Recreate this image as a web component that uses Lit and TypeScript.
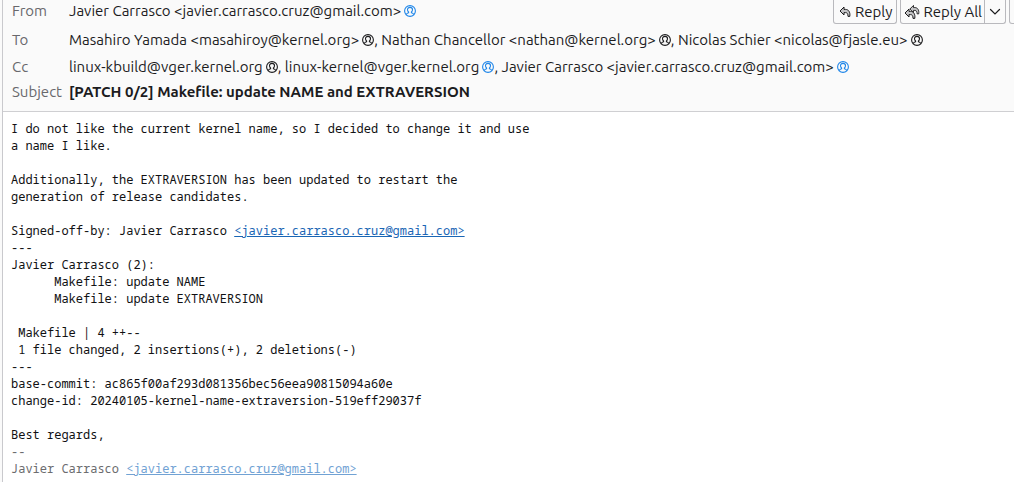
import { LitElement, html, css, svg, nothing } from "lit";
import { customElement, property } from "lit/decorators.js";

interface Contact {
  text: string;
  known?: boolean;
}

interface Line {
  text: string;
  address?: string;
}

const FROM: Contact[] = [{ text: "Javier Carrasco <javier.carrasco.cruz@gmail.com>", known: true }];
const TO: Contact[] = [
  { text: "Masahiro Yamada <masahiroy@kernel.org>" },
  { text: "Nathan Chancellor <nathan@kernel.org>" },
  { text: "Nicolas Schier <nicolas@fjasle.eu>" },
];
const CC: Contact[] = [
  { text: "linux-kbuild@vger.kernel.org" },
  { text: "linux-kernel@vger.kernel.org", known: true },
  { text: "Javier Carrasco <javier.carrasco.cruz@gmail.com>", known: true },
];

const ADDRESS = "javier.carrasco.cruz@gmail.com";

const BODY: Line[] = [
  { text: "I do not like the current kernel name, so I decided to change it and use" },
  { text: "a name I like." },
  { text: "" },
  { text: "Additionally, the EXTRAVERSION has been updated to restart the" },
  { text: "generation of release candidates." },
  { text: "" },
  { text: "Signed-off-by: Javier Carrasco ", address: ADDRESS },
  { text: "---" },
  { text: "Javier Carrasco (2):" },
  { text: "      Makefile: update NAME" },
  { text: "      Makefile: update EXTRAVERSION" },
  { text: "" },
  { text: " Makefile | 4 ++--" },
  { text: " 1 file changed, 2 insertions(+), 2 deletions(-)" },
  { text: "---" },
  { text: "base-commit: ac865f00af293d081356bec56eea90815094a60e" },
  { text: "change-id: 20240105-kernel-name-extraversion-519eff29037f" },
  { text: "" },
  { text: "Best regards," },
];

const SIGNATURE: Line[] = [{ text: "--" }, { text: "Javier Carrasco ", address: ADDRESS }];

const arrow = svg`<path d="M5 1 1 5l4 4V6.600h1.500c1.700 0 2.500 1.200 2.500 3.800h1.800c.6-4.400-1.300-7-4.300-7H5Z"
  fill="#c4c4c6" stroke="currentColor" stroke-width="1" stroke-linejoin="round" />`;

@customElement("mail-contacts")
class MailContacts extends LitElement {
  @property({ attribute: false }) contacts: Contact[] = [];

  static styles = css`
    :host {
      display: block;
    }
    .badge {
      width: 12px;
      height: 12px;
      margin-left: 3px;
      vertical-align: -1px;
      color: #1c1c1e;
    }
    .known {
      color: #1f86e8;
    }
  `;

  render() {
    return this.contacts.map(
      (c, i) => html`${i ? ", " : ""}${c.text}<svg
          class="badge ${c.known ? "known" : ""}"
          viewBox="0 0 12 12"
          fill="none"
          stroke="currentColor"
          stroke-width="1.1"
          aria-hidden="true"
        >
          <circle cx="6" cy="6" r="5.400" />
          <path d="M2.300 9.700c.3-1.200 1-1.600 2.300-1.900V7C3.700 6.300 3.500 5.500 3.500 4.700 3.500 3.200 4.500 2.400 6 2.400s2.500.8 2.500 2.300c0 .8-.2 1.600-1.100 2.300v.8c1.300.3 2 .7 2.300 1.900" />
        </svg>`,
    );
  }
}

@customElement("app-root")
class AppRoot extends LitElement {
  static styles = css`
    :host {
      display: block;
      padding-left: 2px;
      overflow: hidden;
      background: linear-gradient(to right, #fafafa 2px, #ffffff 2px);
    }
    .message {
      border-left: 1px solid #c9c9cd;
      background: #ffffff;
    }
    .header {
      display: flex;
      flex-direction: column;
      gap: 5px;
      padding-bottom: 8px;
      border-bottom: 1px solid #cfcfd2;
      background: #fafafa;
      color: #1c1c1e;
      font: 15px/22px Ubuntu, "Noto Sans", sans-serif;
    }
    .row {
      display: flex;
      white-space: nowrap;
    }
    .row:last-child {
      margin-top: -2px;
    }
    .label {
      flex: none;
      width: 57px;
      padding-left: 9px;
      color: #68686c;
    }
    .value {
      flex: 1;
    }
    .subject {
      margin: 0;
      font-size: inherit;
      font-weight: 700;
    }
    .actions {
      display: flex;
      flex: none;
      gap: 3px;
      margin-right: -13px;
    }
    .group {
      display: flex;
      box-sizing: border-box;
      height: 24px;
      border: 1px solid #b9b9bd;
      border-top: 0;
      border-radius: 0 0 3px 3px;
    }
    .button {
      display: flex;
      align-items: center;
      gap: 3px;
      padding: 0 4px;
      border: 0;
      background: none;
      color: inherit;
      font: inherit;
    }
    .all {
      padding: 0 2px 0 3px;
    }
    .more {
      border-left: 1px solid #b9b9bd;
    }
    .next {
      width: 16px;
    }
    .body {
      padding: 8px 8px 5px;
      color: #101012;
      font: 12px/17px "Noto Sans Mono", "DejaVu Sans Mono", monospace;
      white-space: pre-wrap;
    }
    .line {
      min-height: 17px;
    }
    .link {
      color: #1a66b5;
    }
    .signature {
      color: #6b6b6e;
    }
    .signature .link {
      color: #71a2d4;
    }
  `;

  private lines(lines: Line[]) {
    return lines.map(
      (l) =>
        html`<div class="line">${l.text}${l.address
          ? html`<a class="link" href="mailto:${l.address}">${`<${l.address}>`}</a>`
          : nothing}</div>`,
    );
  }

  render() {
    return html`<article class="message">
      <header class="header">
        <div class="row">
          <span class="label">From</span>
          <mail-contacts class="value" .contacts=${FROM}></mail-contacts>
          <div class="actions">
            <div class="group">
              <button class="button">
                <svg width="14" height="12" viewBox="0 0 12 12" aria-hidden="true">${arrow}</svg>Reply
              </button>
            </div>
            <div class="group">
              <button class="button all">
                <svg width="16" height="14" viewBox="0 0 16 14" aria-hidden="true">
                  <g transform="translate(5 -0.500) scale(.9)">${arrow}</g>
                  <g transform="translate(0 3)">${arrow}</g></svg>Reply All
              </button>
              <button class="button more" aria-label="More reply options">
                <svg width="12" height="12" viewBox="0 0 12 12" fill="none" stroke="currentColor" stroke-width="1.2" stroke-linecap="round" aria-hidden="true">
                  <path d="M1.500 3.500 6 8l4.500-4.500" />
                </svg>
              </button>
            </div>
            <div class="group"><button class="button next" aria-label="Forward"></button></div>
          </div>
        </div>
        <div class="row">
          <span class="label">To</span>
          <mail-contacts class="value" .contacts=${TO}></mail-contacts>
        </div>
        <div class="row">
          <span class="label">Cc</span>
          <mail-contacts class="value" .contacts=${CC}></mail-contacts>
        </div>
        <div class="row">
          <span class="label">Subject</span>
          <h1 class="subject">[PATCH 0/2] Makefile: update NAME and EXTRAVERSION</h1>
        </div>
      </header>
      <section class="body">${this.lines(BODY)}<footer class="signature">${this.lines(SIGNATURE)}</footer></section>
    </article>`;
  }
}
